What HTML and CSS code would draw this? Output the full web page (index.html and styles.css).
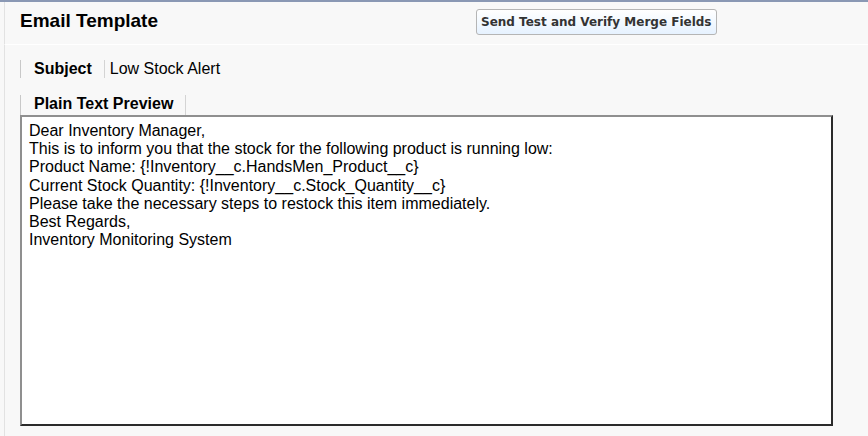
FILE: index.html
```html
<!DOCTYPE html>
<html>
<head>
<meta charset="utf-8">
<link rel="stylesheet" href="styles.css">
</head>
<body>
<div class="page">
  <div class="header">
    <h2 class="title">Email Template</h2>
    <button class="btn">Send Test and Verify Merge Fields</button>
  </div>
  <div class="body">
    <div class="row">
      <div class="label">Subject</div>
      <div class="value">Low Stock Alert</div>
    </div>
    <div class="tab-label"><span>Plain Text Preview</span></div>
    <div class="preview">Dear Inventory Manager,
This is to inform you that the stock for the following product is running low:
Product Name: {!Inventory__c.HandsMen_Product__c}
Current Stock Quantity: {!Inventory__c.Stock_Quantity__c}
Please take the necessary steps to restock this item immediately.
Best Regards,
Inventory Monitoring System</div>
  </div>
</div>
</body>
</html>
```
FILE: styles.css
```css
html, body {
  margin: 0;
  padding: 0;
  background: #f8f8f8;
  font-family: "Liberation Sans", Arial, sans-serif;
  color: #000;
}
.page {
  width: 868px;
  height: 436px;
  box-sizing: border-box;
  border-top: 2px solid #8a98b4;
  padding-left: 4px;
  overflow: hidden;
}
.header {
  display: flex;
  align-items: flex-start;
  height: 42px;
  border-left: 1px solid #e2e2e2;
  border-bottom: 1px solid #ffffff;
  padding-left: 15px;
}
.title {
  margin: 8px 0 0 0;
  font-size: 19px;
  line-height: 22px;
  font-weight: bold;
  width: 456px;
  flex: none;
}
.btn {
  font-family: "DejaVu Sans", Verdana, sans-serif;
  font-weight: bold;
  font-size: 12px;
  color: #333;
  height: 26px;
  margin: 7px 0 0 0;
  padding: 0 4px;
  border: 1px solid #b5b5b5;
  border-radius: 3px;
  background: linear-gradient(#ffffff, #e6f2ff);
  white-space: nowrap;
}
.body {
  border-left: 1px solid #e2e2e2;
  padding: 15px 0 0 15px;
  height: 391px;
  box-sizing: border-box;
}
.row {
  display: flex;
  align-items: center;
  height: 18px;
  border-left: 1px solid #c8c8c8;
  font-size: 16px;
  line-height: 18px;
}
.label {
  font-weight: bold;
  padding: 0 12px 0 13px;
  border-right: 1px solid #d4d4d4;
}
.value {
  padding-left: 5px;
}
.tab-label {
  margin-top: 17px;
  display: flex;
}
.tab-label span {
  display: block;
  font-size: 16px;
  font-weight: bold;
  line-height: 18px;
  padding: 0 12px 2px 13px;
  border-left: 1px solid #c8c8c8;
  border-right: 1px solid #d4d4d4;
}
.preview {
  width: 813px;
  height: 311px;
  box-sizing: border-box;
  background: #fff;
  border-top: 2px solid #8f8f8f;
  border-left: 2px solid #8f8f8f;
  border-right: 2px solid #2b2b2b;
  border-bottom: 2px solid #2b2b2b;
  padding: 5px 7px;
  font-size: 16px;
  line-height: 18.2px;
  white-space: pre-wrap;
}
```
